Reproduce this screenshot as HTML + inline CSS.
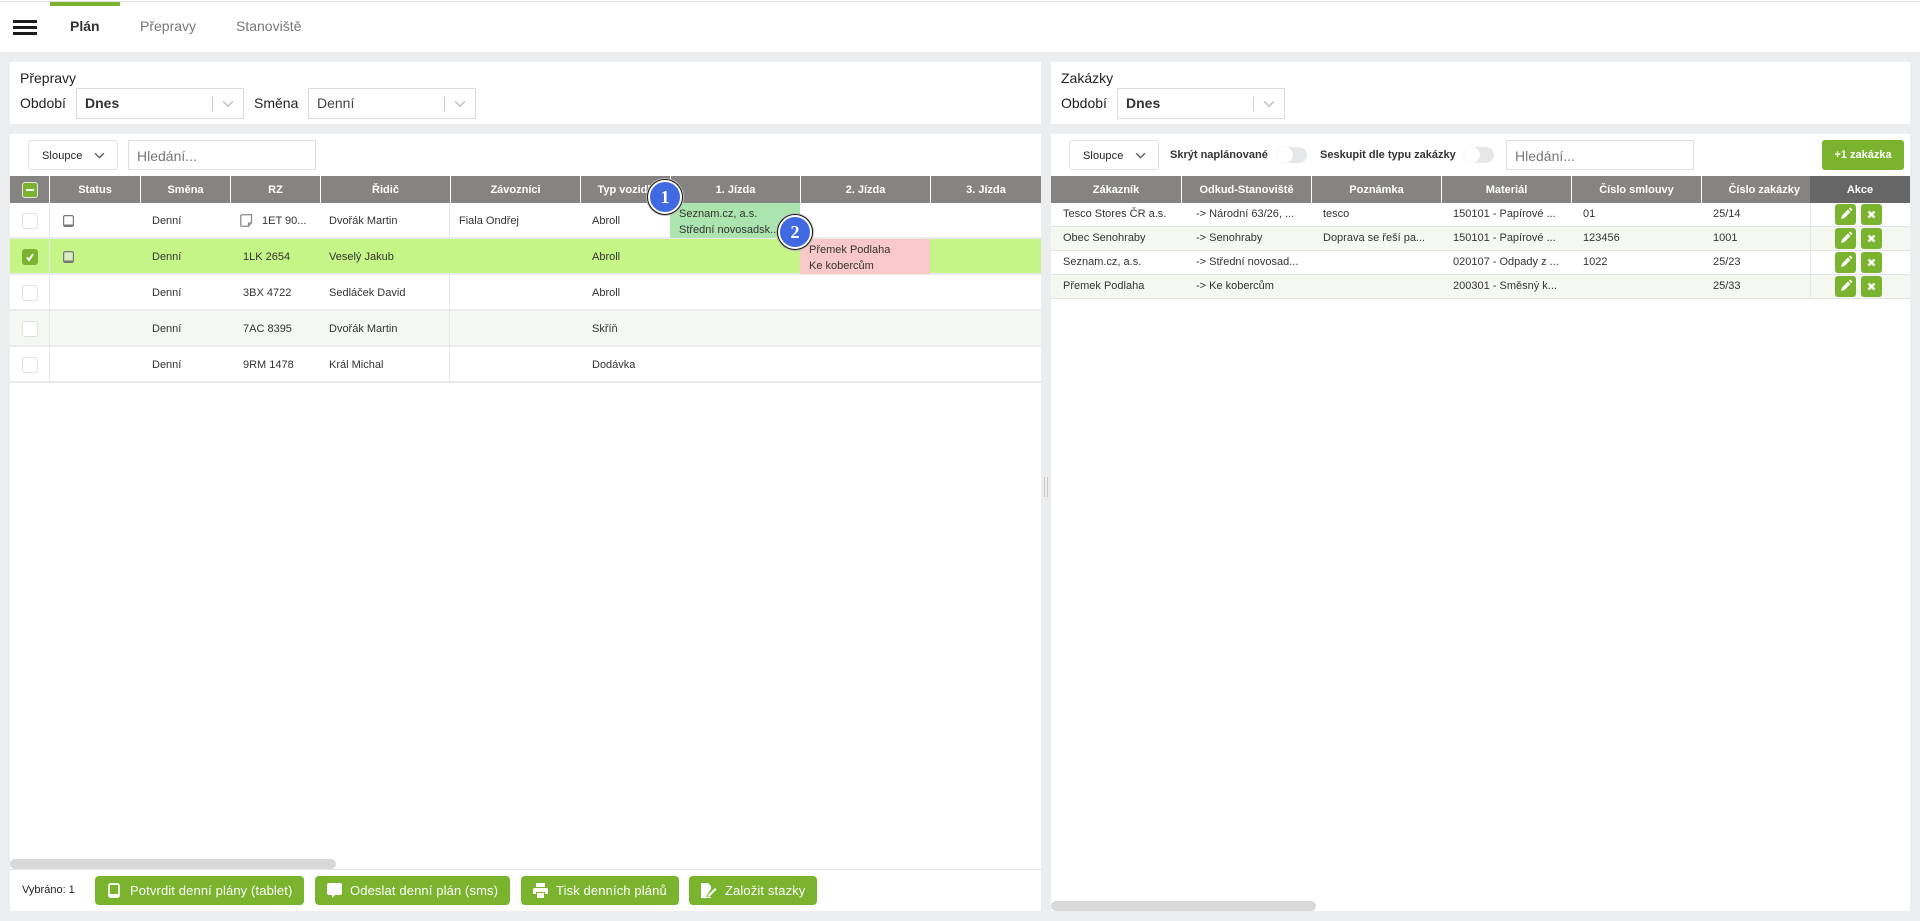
<!DOCTYPE html>
<html lang="cs"><head><meta charset="utf-8"><title>Plán</title>
<style>
html,body{margin:0;padding:0;width:1920px;height:921px;overflow:hidden;background:#ecedef;font-family:"Liberation Sans",Arial,sans-serif;color:#333}
div,span,svg{position:absolute;box-sizing:border-box}
.t{white-space:nowrap;font-size:11px;line-height:16px;color:#333}
.w{background:#fff}
.h{height:27px;top:176px;background:#868482;color:#fff;font-weight:bold;font-size:11px;line-height:29px;text-align:center;white-space:nowrap;overflow:hidden}
.l{font-size:14px;line-height:18px;color:#222;white-space:nowrap}
.sel{height:31px;top:88px;width:168px;border:1px solid #dcdcdc;background:#fff}
.sel b,.sel i{position:absolute;left:8px;top:5px;font-size:14px;line-height:18px;font-style:normal;color:#333}
.sel i{color:#444}
.sel u{position:absolute;left:135px;top:8px;width:1px;height:14px;background:#ccc}
.sel svg{left:145px;top:11px}
.btn{top:140px;width:90px;height:30px;border:1px solid #e2e2e2;border-radius:3px;background:#fff}
.btn span{left:13px;top:7px;font-size:11px;line-height:16px;color:#222;white-space:nowrap;letter-spacing:.1px}
.btn svg{left:65px;top:11px}
.in{top:140px;width:188px;height:30px;border:1px solid #dfdfdf;background:#fff}
.in span{left:8px;top:6px;font-size:14px;line-height:18px;color:#777;white-space:nowrap}
.r{left:10px;width:1031px;height:36px;border-bottom:2px solid #e8eaeb}
.q{left:1051px;width:859px;height:24px;border-bottom:1px solid #e2e4e4}
.cb{left:22px;width:16px;height:16px;border:1px solid #e0e0e0;border-radius:3px;background:#fff}
.g{height:29px;top:876px;background:#7ab32e;border-radius:4px;color:#fff;font-size:13px;line-height:29px;white-space:nowrap;letter-spacing:.12px}
.g span{top:0}
.ab{width:21px;height:21px;background:#7ab32e;border-radius:3px}
.ab svg{left:0;top:0}
.tog{width:30px;height:16px;top:147px;border-radius:8px;background:#e6e7e9}
.tog:after{content:"";position:absolute;left:0;top:0;width:16px;height:16px;border-radius:8px;background:#fff;box-shadow:0 0 1px #ddd}
.bd{width:34px;height:34px;border-radius:50%;background:#4169e1;border:2px solid #fff;box-shadow:0 0 0 1px #111,0 0 0 2px #bbb;color:#fff;font-family:"Liberation Serif",serif;font-weight:bold;font-size:18px;line-height:30px;text-align:center}
.sb{background:#d8d8d8;border-radius:5px;height:10px}
</style></head><body>
<div class="w" style="left:0;top:0;width:1920px;height:52px"></div>
<div style="left:0;top:1px;width:1920px;height:1px;background:#e2e2e2"></div>
<div style="left:50px;top:2px;width:70px;height:4px;background:#7ab32e"></div>
<div style="left:13px;top:20px;width:24px;height:3px;background:#1a1a1a"></div>
<div style="left:13px;top:26px;width:24px;height:3px;background:#1a1a1a"></div>
<div style="left:13px;top:32px;width:24px;height:3px;background:#1a1a1a"></div>
<span class="l" style="left:70px;top:17px;font-weight:bold;color:#333">Plán</span>
<span class="l" style="left:140px;top:17px;color:#777">Přepravy</span>
<span class="l" style="left:236px;top:17px;color:#777">Stanoviště</span>

<!-- left filter panel -->
<div class="w" style="left:10px;top:62px;width:1031px;height:62px"></div>
<span class="l" style="left:20px;top:69px">Přepravy</span>
<span class="l" style="left:20px;top:94px">Období</span>
<div class="sel" style="left:76px"><b>Dnes</b><u></u><svg width="12" height="8" viewBox="0 0 13 9"><path d="M1 1.500l5.500 5.500L12 1.500" fill="none" stroke="#c8c8c8" stroke-width="2"/></svg></div>
<span class="l" style="left:254px;top:94px">Směna</span>
<div class="sel" style="left:308px"><i>Denní</i><u></u><svg width="12" height="8" viewBox="0 0 13 9"><path d="M1 1.500l5.500 5.500L12 1.500" fill="none" stroke="#c8c8c8" stroke-width="2"/></svg></div>

<!-- left table panel -->
<div class="w" style="left:10px;top:134px;width:1031px;height:777px"></div>
<div class="btn" style="left:28px"><span>Sloupce</span><svg width="11" height="7" viewBox="0 0 12 8"><path d="M1 1.500l5 5 5-5" fill="none" stroke="#555" stroke-width="1.600"/></svg></div>
<div class="in" style="left:128px"><span>Hledání...</span></div>

<div class="h" style="left:10px;width:39px"></div>
<div class="h" style="left:50px;width:90px">Status</div>
<div class="h" style="left:141px;width:89px">Směna</div>
<div class="h" style="left:231px;width:89px">RZ</div>
<div class="h" style="left:321px;width:129px">Řidič</div>
<div class="h" style="left:451px;width:129px">Závozníci</div>
<div class="h" style="left:581px;width:89px;padding-left:3px">Typ vozidla</div>
<div class="h" style="left:671px;width:129px">1. Jízda</div>
<div class="h" style="left:801px;width:129px">2. Jízda</div>
<div class="h" style="left:931px;width:110px">3. Jízda</div>

<div class="r" style="top:203px;background:#fff"></div>
<div class="r" style="top:239px;background:#c5f487"></div>
<div class="r" style="top:275px;background:#fff"></div>
<div class="r" style="top:311px;background:#f5f8f0"></div>
<div class="r" style="top:347px;background:#fff"></div>
<div style="left:49px;top:203px;width:1px;height:180px;background:#e3e5e6"></div>
<div style="left:449px;top:203px;width:1px;height:36px;background:#e3e5e6"></div>
<div style="left:449px;top:275px;width:1px;height:108px;background:#e3e5e6"></div>
<div style="left:670px;top:203px;width:130px;height:35px;background:#abe4ae"></div>
<div style="left:800px;top:239px;width:130px;height:35px;background:#f9c9c9"></div>

<div class="cb" style="top:182px;background:#7ab32e;border:1px solid #e6e6e6"><div style="left:3px;top:6px;width:8px;height:2px;background:#fff"></div></div>
<div class="cb" style="top:213px"></div>
<div class="cb" style="top:249px;background:#7ab32e;border-color:#7ab32e"><svg style="left:0;top:0" width="14" height="14" viewBox="0 0 14 14"><path d="M4 7.500l2 2.500 4-6" fill="none" stroke="#fff" stroke-width="2"/></svg></div>
<div class="cb" style="top:285px"></div>
<div class="cb" style="top:321px"></div>
<div class="cb" style="top:357px"></div>

<svg style="left:63px;top:215px" width="11" height="12" viewBox="0 0 11 12"><rect x=".6" y=".6" width="9.800" height="10.800" rx="1.500" fill="none" stroke="#777" stroke-width="1.200"/><rect x="1" y="9.500" width="9" height="2" fill="#777"/></svg>
<svg style="left:63px;top:251px" width="11" height="12" viewBox="0 0 11 12"><rect x=".6" y=".6" width="9.800" height="10.800" rx="1.500" fill="#d9ecc0" stroke="#777" stroke-width="1.200"/><rect x="1" y="9.500" width="9" height="2" fill="#777"/></svg>
<svg style="left:240px;top:214px" width="13" height="13" viewBox="0 0 13 13"><path d="M1.500.75h10v8l-3 3.500h-7a.7.7 0 0 1-.7-.7V1.500z M11.500 9H8.500v3" fill="none" stroke="#8a8a8a" stroke-width="1.300"/></svg>

<span class="t" style="left:152px;top:213px">Denní</span>
<span class="t" style="left:152px;top:249px">Denní</span>
<span class="t" style="left:152px;top:285px">Denní</span>
<span class="t" style="left:152px;top:321px">Denní</span>
<span class="t" style="left:152px;top:357px">Denní</span>
<span class="t" style="left:262px;top:213px">1ET 90...</span>
<span class="t" style="left:243px;top:249px">1LK 2654</span>
<span class="t" style="left:243px;top:285px">3BX 4722</span>
<span class="t" style="left:243px;top:321px">7AC 8395</span>
<span class="t" style="left:243px;top:357px">9RM 1478</span>
<span class="t" style="left:329px;top:213px">Dvořák Martin</span>
<span class="t" style="left:329px;top:249px">Veselý Jakub</span>
<span class="t" style="left:329px;top:285px">Sedláček David</span>
<span class="t" style="left:329px;top:321px">Dvořák Martin</span>
<span class="t" style="left:329px;top:357px">Král Michal</span>
<span class="t" style="left:459px;top:213px">Fiala Ondřej</span>
<span class="t" style="left:592px;top:213px">Abroll</span>
<span class="t" style="left:592px;top:249px">Abroll</span>
<span class="t" style="left:592px;top:285px">Abroll</span>
<span class="t" style="left:592px;top:321px">Skříň</span>
<span class="t" style="left:592px;top:357px">Dodávka</span>
<span class="t" style="left:679px;top:206px">Seznam.cz, a.s.</span>
<span class="t" style="left:679px;top:222px">Střední novosadsk...</span>
<span class="t" style="left:809px;top:242px">Přemek Podlaha</span>
<span class="t" style="left:809px;top:258px">Ke kobercům</span>
<div class="bd" style="left:648px;top:180px">1</div>
<div class="bd" style="left:778px;top:215px">2</div>

<div class="sb" style="left:10px;top:859px;width:326px"></div>
<div style="left:10px;top:869px;width:1031px;height:1px;background:#e3e5e6"></div>
<span class="t" style="left:22px;top:882px;color:#222">Vybráno: 1</span>

<div class="g" style="left:95px;width:209px"><svg style="left:13px;top:7px" width="12" height="15" viewBox="0 0 12 15"><rect x="1" y="1" width="10" height="13" rx="1.500" fill="none" stroke="#fff" stroke-width="1.700"/><rect x="1" y="11" width="10" height="3" fill="#fff"/></svg><span style="left:35px">Potvrdit denní plány (tablet)</span></div>
<div class="g" style="left:315px;width:195px"><svg style="left:12px;top:7px" width="15" height="15" viewBox="0 0 15 15"><path d="M2 0h11a2 2 0 0 1 2 2v8a2 2 0 0 1-2 2H8l-3 3v-3H2a2 2 0 0 1-2-2V2a2 2 0 0 1 2-2z" fill="#fff"/></svg><span style="left:35px">Odeslat denní plán (sms)</span></div>
<div class="g" style="left:521px;width:158px"><svg style="left:12px;top:7px" width="15" height="15" viewBox="0 0 15 15"><path d="M3 0h9v4H3zM1.500 5h12A1.500 1.500 0 0 1 15 6.500V11h-3V9H3v2H0V6.500A1.500 1.500 0 0 1 1.500 5zM4 10h7v5H4z" fill="#fff"/></svg><span style="left:35px">Tisk denních plánů</span></div>
<div class="g" style="left:689px;width:128px"><svg style="left:12px;top:7px" width="16" height="15" viewBox="0 0 16 15"><path d="M0 0h7l3 3v3L6 12l-1 2h5v1H0z" fill="#fff"/><path d="M7 12l7-7 1.500 1.500-7 7-2 .5z" fill="#fff"/></svg><span style="left:36px">Založit stazky</span></div>

<!-- splitter -->
<div style="left:1044px;top:477px;width:1px;height:20px;background:#c8c8c8"></div>
<div style="left:1047px;top:477px;width:1px;height:20px;background:#c8c8c8"></div>

<!-- right filter panel -->
<div class="w" style="left:1051px;top:62px;width:859px;height:62px"></div>
<span class="l" style="left:1061px;top:69px">Zakázky</span>
<span class="l" style="left:1061px;top:94px">Období</span>
<div class="sel" style="left:1117px"><b>Dnes</b><u></u><svg width="12" height="8" viewBox="0 0 13 9"><path d="M1 1.500l5.500 5.500L12 1.500" fill="none" stroke="#c8c8c8" stroke-width="2"/></svg></div>

<!-- right table panel -->
<div class="w" style="left:1051px;top:134px;width:859px;height:777px"></div>
<div class="btn" style="left:1069px"><span>Sloupce</span><svg width="11" height="7" viewBox="0 0 12 8"><path d="M1 1.500l5 5 5-5" fill="none" stroke="#555" stroke-width="1.600"/></svg></div>
<span class="t" style="left:1170px;top:147px;font-weight:bold">Skrýt naplánované</span>
<div class="tog" style="left:1277px"></div>
<span class="t" style="left:1320px;top:147px;font-weight:bold">Seskupit dle typu zakázky</span>
<div class="tog" style="left:1464px"></div>
<div class="in" style="left:1506px"><span>Hledání...</span></div>
<div style="left:1822px;top:140px;width:82px;height:30px;background:#7ab32e;border-radius:3px;color:#fff;font-weight:bold;font-size:11px;line-height:31px;text-align:center">+1 zakázka</div>

<div class="h" style="left:1051px;width:130px">Zákazník</div>
<div class="h" style="left:1182px;width:129px">Odkud-Stanoviště</div>
<div class="h" style="left:1312px;width:129px">Poznámka</div>
<div class="h" style="left:1442px;width:129px">Materiál</div>
<div class="h" style="left:1572px;width:129px">Číslo smlouvy</div>
<div class="h" style="left:1702px;width:108px;text-align:right;padding-right:10px">Číslo zakázky</div>
<div class="h" style="left:1810px;width:100px;background:#666">Akce</div>

<div class="q" style="top:203px;background:#fff"></div>
<div class="q" style="top:227px;background:#f5f8f0"></div>
<div class="q" style="top:251px;background:#fff"></div>
<div class="q" style="top:275px;background:#f5f8f0"></div>
<div style="left:1810px;top:203px;width:1px;height:96px;background:#e6e8e8"></div>

<span class="t" style="left:1063px;top:206px">Tesco Stores ČR a.s.</span>
<span class="t" style="left:1063px;top:230px">Obec Senohraby</span>
<span class="t" style="left:1063px;top:254px">Seznam.cz, a.s.</span>
<span class="t" style="left:1063px;top:278px">Přemek Podlaha</span>
<span class="t" style="left:1196px;top:206px">-&gt; Národní 63/26, ...</span>
<span class="t" style="left:1196px;top:230px">-&gt; Senohraby</span>
<span class="t" style="left:1196px;top:254px">-&gt; Střední novosad...</span>
<span class="t" style="left:1196px;top:278px">-&gt; Ke kobercům</span>
<span class="t" style="left:1323px;top:206px">tesco</span>
<span class="t" style="left:1323px;top:230px">Doprava se řeší pa...</span>
<span class="t" style="left:1453px;top:206px">150101 - Papírové ...</span>
<span class="t" style="left:1453px;top:230px">150101 - Papírové ...</span>
<span class="t" style="left:1453px;top:254px">020107 - Odpady z ...</span>
<span class="t" style="left:1453px;top:278px">200301 - Směsný k...</span>
<span class="t" style="left:1583px;top:206px">01</span>
<span class="t" style="left:1583px;top:230px">123456</span>
<span class="t" style="left:1583px;top:254px">1022</span>
<span class="t" style="left:1713px;top:206px">25/14</span>
<span class="t" style="left:1713px;top:230px">1001</span>
<span class="t" style="left:1713px;top:254px">25/23</span>
<span class="t" style="left:1713px;top:278px">25/33</span>

<div class="ab" style="left:1835px;top:204px"><svg width="21" height="21" viewBox="0 0 21 21"><path d="M6 15l1-3.500 6-6 2.500 2.500-6 6zM13.800 4.700l.7-.7a1 1 0 0 1 1.400 0l1 1a1 1 0 0 1 0 1.400l-.7.700z" fill="#fff"/></svg></div>
<div class="ab" style="left:1861px;top:204px"><svg width="21" height="21" viewBox="0 0 21 21"><path d="M7.500 7.500l6 6m0-6l-6 6" stroke="#fff" stroke-width="2.400" fill="none"/></svg></div>
<div class="ab" style="left:1835px;top:228px"><svg width="21" height="21" viewBox="0 0 21 21"><path d="M6 15l1-3.500 6-6 2.500 2.500-6 6zM13.800 4.700l.7-.7a1 1 0 0 1 1.400 0l1 1a1 1 0 0 1 0 1.400l-.7.700z" fill="#fff"/></svg></div>
<div class="ab" style="left:1861px;top:228px"><svg width="21" height="21" viewBox="0 0 21 21"><path d="M7.500 7.500l6 6m0-6l-6 6" stroke="#fff" stroke-width="2.400" fill="none"/></svg></div>
<div class="ab" style="left:1835px;top:252px"><svg width="21" height="21" viewBox="0 0 21 21"><path d="M6 15l1-3.500 6-6 2.500 2.500-6 6zM13.800 4.700l.7-.7a1 1 0 0 1 1.400 0l1 1a1 1 0 0 1 0 1.400l-.7.700z" fill="#fff"/></svg></div>
<div class="ab" style="left:1861px;top:252px"><svg width="21" height="21" viewBox="0 0 21 21"><path d="M7.500 7.500l6 6m0-6l-6 6" stroke="#fff" stroke-width="2.400" fill="none"/></svg></div>
<div class="ab" style="left:1835px;top:276px"><svg width="21" height="21" viewBox="0 0 21 21"><path d="M6 15l1-3.500 6-6 2.500 2.500-6 6zM13.800 4.700l.7-.7a1 1 0 0 1 1.400 0l1 1a1 1 0 0 1 0 1.400l-.7.700z" fill="#fff"/></svg></div>
<div class="ab" style="left:1861px;top:276px"><svg width="21" height="21" viewBox="0 0 21 21"><path d="M7.500 7.500l6 6m0-6l-6 6" stroke="#fff" stroke-width="2.400" fill="none"/></svg></div>

<div class="sb" style="left:1051px;top:901px;width:265px"></div>
</body></html>
